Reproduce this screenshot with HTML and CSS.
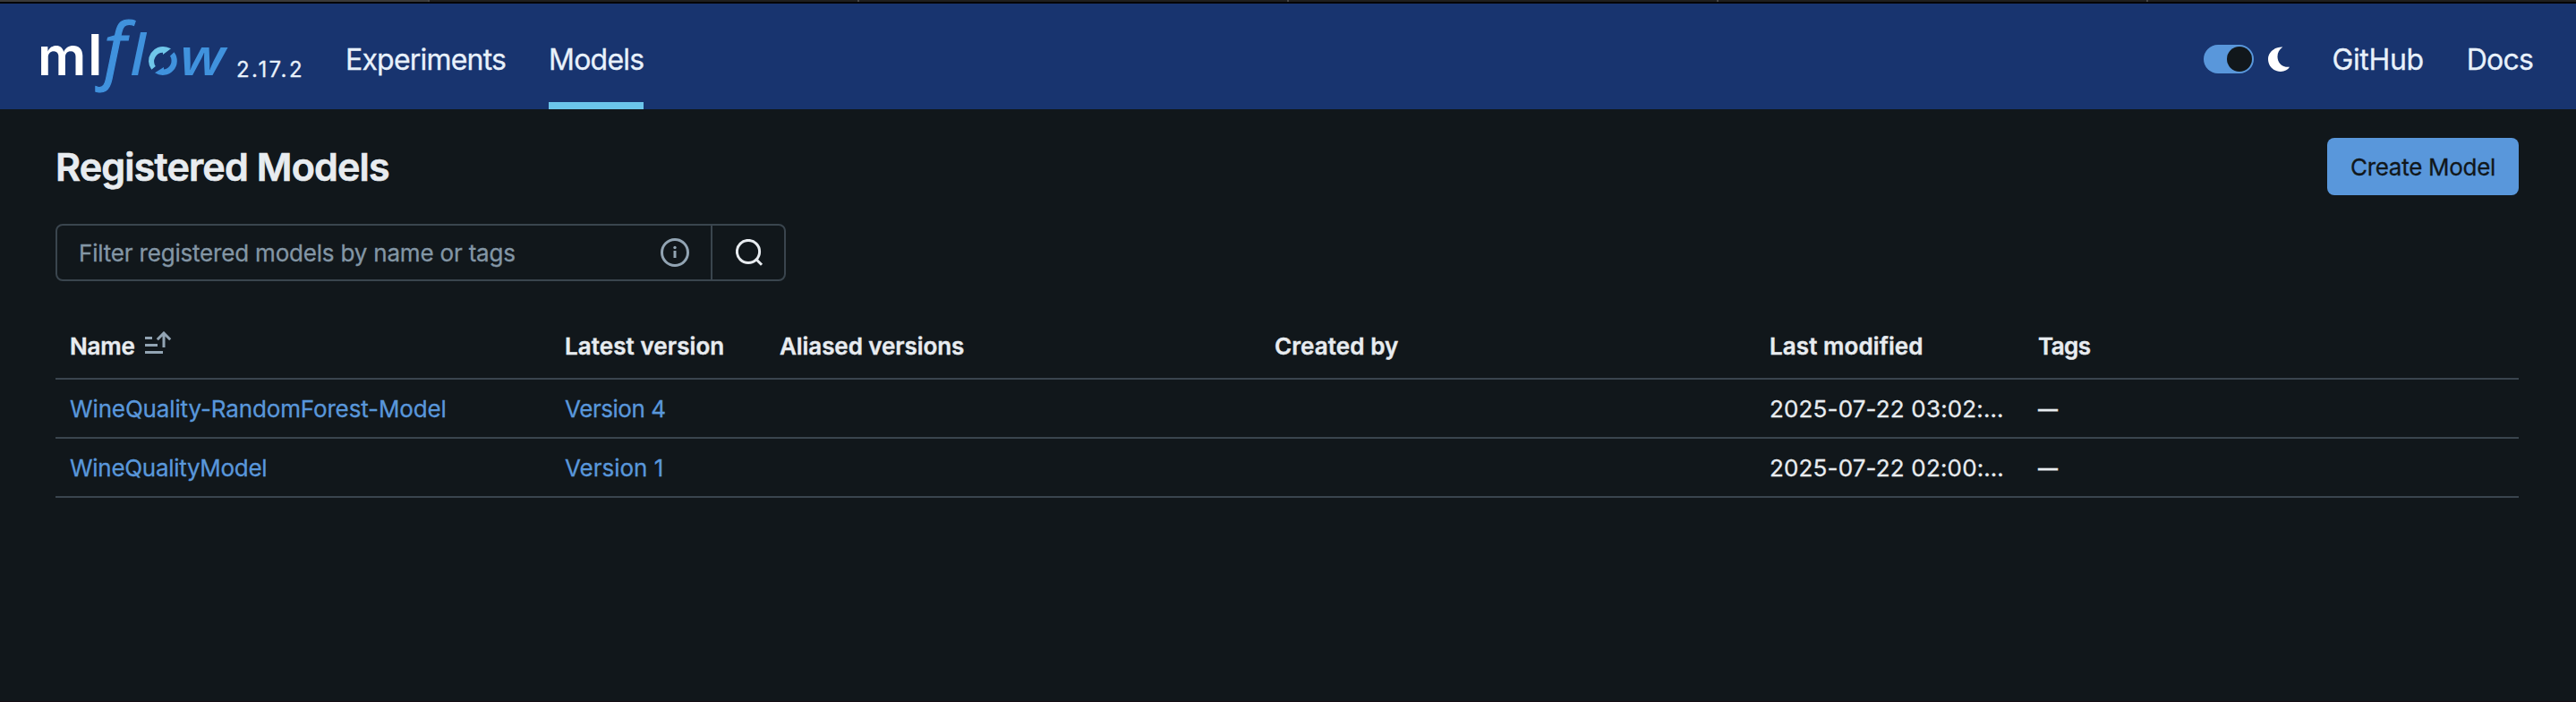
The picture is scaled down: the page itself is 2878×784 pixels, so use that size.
FILE: index.html
```html
<!DOCTYPE html>
<html lang="en">
<head>
<meta charset="utf-8">
<title>Registered Models</title>
<link rel="stylesheet" href="styles.css">
</head>
<body>
<div class="tabstrip"><i class="tab tab-active"></i><i class="tab"></i><i class="tab"></i><i class="tab"></i><i class="tab"></i><i class="tab-last"></i></div>
<header class="topbar">
  <svg class="logo" viewBox="44 20 212 86" width="212" height="86" aria-label="mlflow">
    <g class="logo-white"><text transform="translate(42 84) scale(1.040 1)" font-size="58">m</text><text x="98" y="84" font-size="63">l</text></g>
    <g class="logo-blue">
      <text class="logo-f" x="116" y="84" font-size="80">f</text>
      <text x="145.6" y="84" font-size="62.5">l</text>
      <text transform="translate(201 84) scale(1.180 1)" font-size="57">w</text>
    </g>
    <path class="ring-light" d="M169.300 77.700A16 16 0 0 1 186 52.500L191 54.300L182 61V58.800A9.800 9.800 0 0 0 173.800 74Z"/>
    <path class="ring-blue" d="M194.500 58.200A16 16 0 0 1 173 81.300L183 75V77.500A9.800 9.800 0 0 0 190 62.500Z"/>
  </svg>
  <span class="version">2.17.2</span>
  <nav class="nav-main">
    <a class="nav-link">Experiments</a>
    <a class="nav-link nav-current">Models</a>
  </nav>
  <div class="theme">
    <span class="toggle"><span class="knob"></span></span>
    <svg class="moon" width="24" height="28" viewBox="0 0 24 28"><path d="M16.300.5C8 .2 0 5.500 0 14c0 8 6.500 14 14 14 4.500 0 8-2 10-5.200C15.500 23.500 10.500 18 10.500 11.200 10.500 7 12.500 3 16.300.5Z" fill="#fff"/></svg>
  </div>
  <nav class="nav-side">
    <a class="nav-link nav-github">GitHub</a>
    <a class="nav-link">Docs</a>
  </nav>
</header>
<main class="page">
  <div class="heading">
    <h1>Registered Models</h1>
    <button class="create">Create Model</button>
  </div>
  <div class="search">
    <div class="field"><span class="placeholder">Filter registered models by name or tags</span>
      <svg width="32" height="32" viewBox="0 0 32 32"><circle cx="16" cy="16" r="14.500" fill="none" stroke="#92a4b3" stroke-width="3"/><path d="M14.500 14h3v8h-3z" fill="#92a4b3"/><circle cx="16" cy="10.500" r="1.700" fill="#92a4b3"/></svg>
    </div>
    <div class="go"><svg width="32" height="32" viewBox="0 0 32 32"><circle cx="14" cy="14" r="12.600" fill="none" stroke="#e8ecf0" stroke-width="3"/><path d="M22.800 22.500L29 28.700" stroke="#e8ecf0" stroke-width="3"/></svg></div>
  </div>
  <div class="table">
    <div class="row head">
      <div>Name<svg class="sort" width="30" height="26" viewBox="0 0 30 26"><path d="M0 7.500h8M0 15.500h14M0 23.500h20M21 18V2M13.800 9.200L21 2l7.200 7.200" fill="none" stroke="#92a4b3" stroke-width="3"/></svg></div>
      <div class="t-plain">Latest version</div><div class="t-alias">Aliased versions</div><div class="t-plain">Created by</div><div class="t-plain">Last modified</div><div class="t-tags">Tags</div>
    </div>
    <div class="row">
      <a class="t-long">WineQuality-RandomForest-Model</a><a class="t-ver">Version 4</a><div></div><div></div><div class="t-date">2025-07-22 03:02:…</div><div class="dash">—</div>
    </div>
    <div class="row">
      <a class="t-short">WineQualityModel</a><a class="t-one">Version 1</a><div></div><div></div><div class="t-date">2025-07-22 02:00:…</div><div class="dash">—</div>
    </div>
  </div>
</main>
</body>
</html>
```
FILE: styles.css
```css
* { box-sizing: border-box; }
body {
  margin: 0;
  height: 784px;
  background: #11171b;
  color: #e8ecf0;
  font: 400 26px/32px Inter, "Liberation Sans", sans-serif;
  -webkit-text-stroke: .3px;
  border-bottom: 1px solid #150d14;
}
svg { -webkit-text-stroke: 0; }
.tabstrip { display: flex; height: 4px; background: #1f1f1f; border-bottom: 2px solid #050505; }
.tab { flex: none; width: 480px; height: 2px; border-right: 2px solid #474747; }
.tab-active { background: #3a3a3a; }
.tab-last { flex: 1; }

.topbar { display: flex; height: 118px; padding: 0 48px 0 44px; background: #18346f; color: #e8f1fb; }
.logo { flex: none; margin-top: 16px; overflow: visible; }
.logo-white { fill: #fff; font-family: Inter, sans-serif; font-weight: 600; }
.logo-blue { fill: #4092dd; font-family: "Open Sans", sans-serif; font-style: italic; font-weight: 600; }
.logo .logo-f { font-weight: 400; stroke: #4092dd; stroke-width: 1.2px; }
.ring-light { fill: #70c7ea; }
.ring-blue { fill: #4092dd; }
.version { width: 86px; margin: 58px 0 0 8px; font-size: 24px; letter-spacing: 2.450px; }
.nav-main, .nav-side { display: flex; gap: 48px; }
.nav-main { margin-left: 36px; }
.nav-link { height: 118px; font-size: 32px; line-height: 125px; letter-spacing: -.800px; }
.nav-current { width: 106px; border-bottom: 8px solid #6bc5ea; }
.nav-github { letter-spacing: -.350px; }
.theme { display: flex; gap: 16px; margin: 46px 47px 0 auto; }
.toggle { display: flex; justify-content: flex-end; width: 56px; height: 32px; padding: 2px; border-radius: 16px; background: #5997db; }
.knob { width: 28px; height: 28px; border-radius: 50%; background: #11171b; }
.moon { margin-top: 2px; }

.page { padding: 32px 64px 0 62px; }
.heading { display: flex; justify-content: space-between; align-items: center; height: 64px; }
h1 { margin: 0; font-size: 43px; line-height: 56px; font-weight: 600; letter-spacing: -.840px; -webkit-text-stroke: .7px; }
.create { width: 214px; height: 64px; padding: 2px 0 0; border: 0; border-radius: 8px; background: #5997db; color: #11171b; font: inherit; letter-spacing: -.290px; }
.search { display: flex; width: 816px; height: 64px; margin-top: 32px; border: 2px solid #3a454e; border-radius: 8px; }
.field { display: flex; flex: 1; align-items: center; justify-content: space-between; padding: 0 24px; border-right: 2px solid #3a454e; }
.placeholder { padding-top: 2px; color: #8396a5; letter-spacing: -.190px; }
.go { display: flex; align-items: center; justify-content: center; width: 80px; padding: 2px 0 0 3px; }

.table { margin-top: 36px; }
.row { display: grid; grid-template-columns: 553px 240px 553px 553px 300px 553px; height: 66px; border-bottom: 2px solid #3a454e; line-height: 66px; white-space: nowrap; }
.row > * { height: 64px; padding: 0 16px; letter-spacing: -.190px; }
.row a { color: #5997db; }
.head { height: 74px; font-weight: 600; line-height: 73px; -webkit-text-stroke: .4px; }
.sort { margin-left: 11px; vertical-align: 0; }
.row > .t-plain { letter-spacing: .080px; }
.row > .t-alias { letter-spacing: -.080px; }
.row > .t-tags { letter-spacing: -.600px; }
.row > .t-long { letter-spacing: -.140px; }
.row > .t-short { letter-spacing: -.300px; }
.row > .t-ver { letter-spacing: -.450px; }
.row > .t-one { letter-spacing: -.020px; }
.row > .t-date { letter-spacing: .160px; }
.row > .dash { font-size: 22px; font-weight: 600; letter-spacing: 0; }
```
